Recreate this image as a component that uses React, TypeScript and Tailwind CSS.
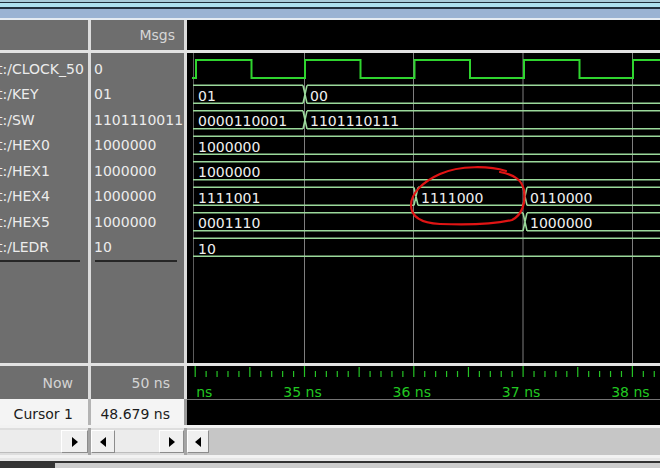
type Seg = { at: number; v: string };
type Signal = { name: string; msg: string; segs?: Seg[] };

const signals: Signal[] = [
  { name: "t:/CLOCK_50", msg: "0" },
  { name: "t:/KEY", msg: "01", segs: [{ at: 193, v: "01" }, { at: 305, v: "00" }] },
  { name: "t:/SW", msg: "1101110011", segs: [{ at: 193, v: "0000110001" }, { at: 305, v: "1101110111" }] },
  { name: "t:/HEX0", msg: "1000000", segs: [{ at: 193, v: "1000000" }] },
  { name: "t:/HEX1", msg: "1000000", segs: [{ at: 193, v: "1000000" }] },
  {
    name: "t:/HEX4",
    msg: "1000000",
    segs: [
      { at: 193, v: "1111001" },
      { at: 416, v: "1111000" },
      { at: 525, v: "0110000" },
    ],
  },
  { name: "t:/HEX5", msg: "1000000", segs: [{ at: 193, v: "0001110" }, { at: 525, v: "1000000" }] },
  { name: "t:/LEDR", msg: "10", segs: [{ at: 193, v: "10" }] },
];

const BUS_TOP = 85.3;
const STEP = 25.5;
const grid = [193.5, 304.5, 413.5, 523, 632.5];
const rises = [196, 305, 414.5, 524, 633];

function Waves() {
  let clk = "M192 78";
  rises.forEach((r) => {
    clk += ` L${r} 78 L${r} 60 L${r + 55.5} 60 L${r + 55.5} 78`;
  });
  clk += " L662 78";

  return (
    <svg width={473} height={310} viewBox="187 53 473 310" className="block">
      {grid.map((x, i) => (
        <line key={x} x1={x} x2={x} y1={53} y2={363} stroke={i === 0 ? "#5c5c5c" : "#7e7e7e"} strokeWidth={1} />
      ))}
      <path d={clk} fill="none" stroke="#2fd42f" strokeWidth={2} />
      {signals.slice(1).map((s, row) => {
        const t = BUS_TOP + STEP * row;
        const segs = s.segs ?? [];
        let d = "";
        segs.forEach((g, i) => {
          const a = i === 0 ? 193 : g.at + 2;
          const b = i < segs.length - 1 ? segs[i + 1].at - 2 : 662;
          d += `M${a} ${t}H${b}M${a} ${t + 18}H${b}`;
          if (i > 0) {
            d += `M${g.at - 2} ${t}L${g.at + 2} ${t + 18}M${g.at - 2} ${t + 18}L${g.at + 2} ${t}`;
          }
        });
        return (
          <g key={s.name}>
            <path d={d} fill="none" stroke="#9bd99b" strokeWidth={1.6} />
            {segs.map((g) => (
              <text key={g.at} x={g.at + 5} y={t + 15.5} fontSize={14} fill="#f0f0f0">
                {g.v}
              </text>
            ))}
          </g>
        );
      })}
      {/* hand drawn mark */}
      <path
        d="M506 171 C490 166, 460 165, 440 174 C422 182, 411 194, 411 205 C411 216, 420 223, 440 224 C465 225, 495 224, 512 220 C522 215, 526 203, 524 190 C522 181, 516 175, 500 172"
        fill="none"
        stroke="#e01414"
        strokeWidth={2.2}
        strokeLinecap="round"
      />
    </svg>
  );
}

function TimeAxis() {
  const ticks: { x: number; k: number }[] = [];
  for (let k = -11; k <= 33; k++) {
    const x = 304.5 + 10.93 * k;
    if (x >= 192 && x <= 660) ticks.push({ x, k });
  }
  const labels = [34, 35, 36, 37, 38];
  return (
    <svg width={473} height={33} viewBox="187 366 473 33" className="block">
      <defs>
        <clipPath id="axis">
          <rect x={192} y={366} width={470} height={33} />
        </clipPath>
      </defs>
      <g clipPath="url(#axis)" stroke="#25c425" strokeWidth={1.2}>
        {ticks.map(({ x, k }) => (
          <line key={k} x1={x} x2={x} y1={k % 10 === 0 ? 366 : k % 5 === 0 ? 367 : 371} y2={377} />
        ))}
      </g>
      <g clipPath="url(#axis)">
        {labels.map((n, i) => (
          <text key={n} x={304.5 + 109.3 * (i - 1) - 2} y={397} fontSize={14} fill="#22c822" textAnchor="middle">
            {n} ns
          </text>
        ))}
      </g>
    </svg>
  );
}

function Arrow({ dir }: { dir: "l" | "r" }) {
  return (
    <svg width={6} height={10} viewBox="0 0 6 10">
      <polygon points={dir === "r" ? "0,0 6,5 0,10" : "6,0 0,5 6,10"} fill="#000" />
    </svg>
  );
}

function Btn({ dir, w }: { dir: "l" | "r"; w: string }) {
  return (
    <div className={`${w} flex items-center justify-center bg-[#f0f0f0] border-r border-b border-[#8c8c8c] border-t border-l border-t-white border-l-white`}>
      <Arrow dir={dir} />
    </div>
  );
}

export default function App() {
  return (
    <div className="w-[660px] h-[468px] overflow-hidden bg-[#bcbcbc] font-['DejaVu_Sans',Verdana,sans-serif] text-[14px] leading-none select-none">
      {/* title stripes */}
      <div className="h-[2px] bg-[#a9cbd9]" />
      <div className="h-px bg-[#1f2d3a]" />
      <div className="h-[4px] bg-[#aee0ee]" />
      <div className="h-[2px] bg-[#22303e]" />
      <div className="h-[9px] bg-[#9ab3d3]" />
      <div className="h-[2px] bg-[#e4ebf2]" />

      {/* header */}
      <div className="flex h-[30px]">
        <div className="w-[88px] bg-[#6e6e6e]" />
        <div className="w-[3px] bg-[#dcdcdc]" />
        <div className="w-[93px] bg-[#6e6e6e] flex items-center justify-end pr-[9px] text-[#d6d6d6]">Msgs</div>
        <div className="w-[3px] bg-[#dcdcdc]" />
        <div className="flex-1 bg-black" />
      </div>
      <div className="h-[3px] bg-[#e2e2e2]" />

      {/* signals */}
      <div className="flex h-[310px]">
        <div className="w-[88px] bg-[#6e6e6e] pt-[3px] overflow-hidden text-[#ececec]">
          {signals.map((s) => (
            <div key={s.name} className="h-[25.5px] flex items-center -ml-[3px] whitespace-nowrap">
              {s.name}
            </div>
          ))}
          <div className="h-[2px] bg-[#262626] mr-[8px]" />
        </div>
        <div className="w-[3px] bg-[#dcdcdc]" />
        <div className="w-[93px] bg-[#6e6e6e] pt-[3px] overflow-hidden text-[#ececec]">
          {signals.map((s) => (
            <div key={s.name} className="h-[25.5px] flex items-center pl-[3px] whitespace-nowrap">
              {s.msg}
            </div>
          ))}
          <div className="h-[2px] bg-[#262626] ml-[4px] mr-[7px]" />
        </div>
        <div className="w-[3px] bg-[#dcdcdc]" />
        <div className="flex-1 bg-black overflow-hidden">
          <Waves />
        </div>
      </div>
      <div className="h-[3px] bg-[#e2e2e2]" />

      {/* now row */}
      <div className="flex h-[33px]">
        <div className="w-[88px] bg-[#6e6e6e] flex items-center justify-end pr-[15px] text-[#d4d4d4]">Now</div>
        <div className="w-[3px] bg-[#dcdcdc]" />
        <div className="w-[93px] bg-[#6e6e6e] flex items-center justify-end pr-[14px] text-[#d4d4d4]">50 ns</div>
        <div className="w-[3px] bg-[#dcdcdc]" />
        <div className="flex-1 bg-black overflow-hidden">
          <TimeAxis />
        </div>
      </div>

      {/* cursor row */}
      <div className="flex h-[26px]">
        <div className="w-[88px] bg-[#f4f4f4] flex items-center justify-end pr-[15px] pt-[4px] text-[#1c1c1c]">Cursor 1</div>
        <div className="w-[3px] bg-[#b4b4b4]" />
        <div className="w-[93px] bg-[#f4f4f4] flex items-center justify-end pr-[14px] pt-[4px] text-[#1c1c1c]">48.679 ns</div>
        <div className="w-[3px] bg-[#9a9a9a]" />
        <div className="flex-1 bg-black border-t border-[#747474]" />
      </div>

      {/* scrollbars */}
      <div className="flex h-[33px] bg-[#a4a4a4] border-y-[3px] border-[#f2f2f2]">
        <div className="w-[88px] flex py-[2px] bg-[#dedede]">
          <div className="flex-1 bg-[#ececec] border-b border-[#bdbdbd]" />
          <Btn dir="r" w="w-[27px]" />
        </div>
        <div className="w-[3px]" />
        <div className="w-[93px] flex py-[2px] bg-[#dedede]">
          <Btn dir="l" w="w-[24px]" />
          <div className="flex-1 bg-[#ececec] border-b border-[#bdbdbd]" />
          <Btn dir="r" w="w-[25px]" />
        </div>
        <div className="w-[3px]" />
        <div className="flex-1 flex py-[2px] bg-[#c6c6c6]">
          <Btn dir="l" w="w-[22px]" />
          <div className="flex-1" />
        </div>
      </div>

      {/* bottom edge */}
      <div className="h-[3px] bg-[#e6e6e6]" />
      <div className="h-[2px] bg-[#333333]" />
      <div className="flex h-[5px]">
        <div className="w-[55px] bg-[#353535]" />
        <div className="flex-1 bg-[#cdcdcd]" />
      </div>
    </div>
  );
}
